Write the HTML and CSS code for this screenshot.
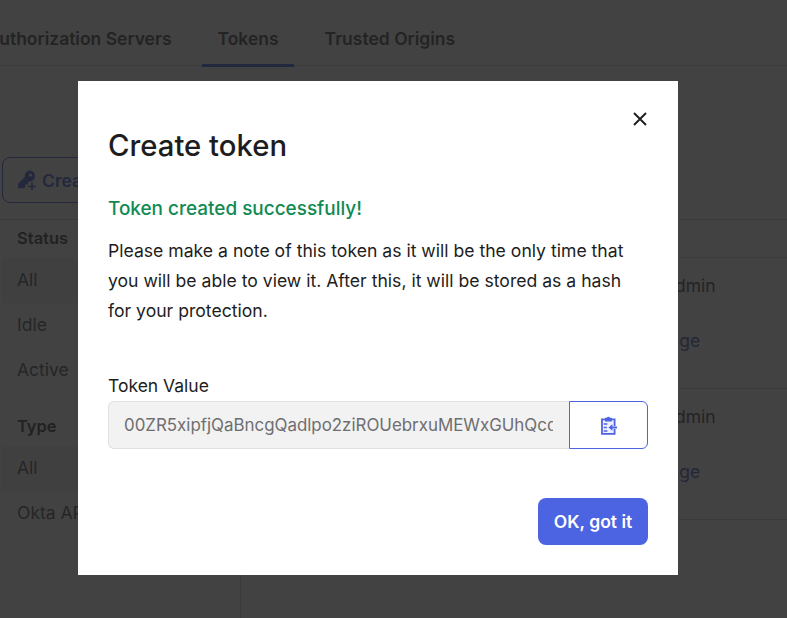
FILE: index.html
```html
<!DOCTYPE html>
<html lang="en">
<head>
<meta charset="utf-8">
<title>Create token</title>
<link rel="stylesheet" href="styles.css">
</head>
<body>
<div class="page">
  <nav class="tabs">
    <a class="tab">Authorization Servers</a>
    <a class="tab active">Tokens</a>
    <a class="tab">Trusted Origins</a>
  </nav>
  <div class="toolbar">
    <button class="create">
      <svg class="key" viewBox="0 0 20 20" width="20" height="20"><path fill="#4c64e2" d="M12.200 0.500a5.600 5.600 0 0 1 1.600 11l-1.400-.2-1.600 1.600v1.600H8.300v2.200l-1.600 1.600H1v-4.400l6.800-6.900A5.600 5.600 0 0 1 12.200.5zm1.200 2.900a1.600 1.600 0 1 0 0 3.200 1.600 1.600 0 0 0 0-3.200z"/><path fill="none" stroke="#fff" stroke-width="4.500" d="M15 13v7M11.500 16.500h7"/><path fill="none" stroke="#4c64e2" stroke-width="1.700" d="M15 12.500v7.500M11.200 16.500h7.600"/></svg>
      Create Token
    </button>
  </div>
  <div class="content">
    <aside class="filters">
      <h3 class="filter-title">Status</h3>
      <div class="filter selected">All</div>
      <div class="filter">Idle</div>
      <div class="filter">Active</div>
      <h3 class="filter-title second">Type</h3>
      <div class="filter selected">All</div>
      <div class="filter">Okta API</div>
    </aside>
    <section class="table">
      <div class="thead"></div>
      <div class="row"><span class="who">Super Admin</span><a class="link">Open page</a></div>
      <div class="row"><span class="who">Super Admin</span><a class="link">Open page</a></div>
    </section>
  </div>
</div>
<div class="overlay">
  <div class="modal" role="dialog">
    <button class="close" aria-label="Close">
      <svg viewBox="0 0 16 16" width="16" height="16"><path fill="none" stroke="#1d1d21" stroke-width="1.900" d="M2 2l12 12M14 2L2 14"/></svg>
    </button>
    <h2 class="title">Create token</h2>
    <p class="success">Token created successfully!</p>
    <p class="note">Please make a note of this token as it will be the only time that you will be able to view it. After this, it will be stored as a hash for your protection.</p>
    <label class="label" for="token">Token Value</label>
    <div class="field">
      <input id="token" class="value" readonly value="00ZR5xipfjQaBncgQadlpo2ziROUebrxuMEWxGUhQcdE3kTz9vPq">
      <button class="copy" aria-label="Copy">
        <svg viewBox="0 0 17 19" width="17" height="19"><path fill="#4c64e2" fill-opacity=".1" stroke="#4c64e2" stroke-width="1.800" d="M2 3.400h12.600v14.400H2z"/><path fill="#4c64e2" d="M5 1.800h1.800a1.700 1.700 0 0 1 3.200 0h1.800v3.600H5z"/><path fill="none" stroke="#4c64e2" stroke-width="1.700" d="M3.800 8h3.600M3.800 11.500h3M3.800 15h3.600"/><path fill="none" stroke="#fff" stroke-width="3" d="M17 11.500H9"/><path fill="#4c64e2" d="M17 10.600H12.400V8.200L8.500 11.500l3.900 3.300v-2.400H17z"/></svg>
      </button>
    </div>
    <div class="actions"><button class="ok">OK, got it</button></div>
  </div>
</div>
</body>
</html>
```
FILE: styles.css
```css
* { box-sizing: border-box; }
html, body { margin: 0; height: 100%; }
body {
  width: 787px;
  height: 618px;
  overflow: hidden;
  position: relative;
  background: #fff;
  font-family: Inter, "Noto Sans", sans-serif;
  font-size: 17.5px;
  color: #1d1d21;
}
.page { height: 618px; overflow: hidden; }
.tabs {
  display: flex;
  height: 66px;
  border-bottom: 1px solid #d7d7dc;
  margin-left: -29px;
  width: 816px;
}
.tab {
  height: 67px;
  padding: 0 15.5px;
  margin-right: 15px;
  line-height: 77px;
  font-weight: 600;
  color: #4a4a4e;
  white-space: nowrap;
  border-bottom: 3px solid transparent;
}
.tab.active { border-bottom-color: #4c64e2; }
.toolbar { padding: 91px 0 16px 2px; height: 154px; border-bottom: 1px solid #d7d7dc; }
.create {
  display: flex;
  align-items: center;
  gap: 5px;
  width: 170px;
  height: 46px;
  padding: 0 14px;
  background: #fff;
  border: 1px solid #4c64e2;
  border-radius: 8px;
  font: 600 17.5px Inter, sans-serif;
  color: #4c64e2;
}
.key { flex: none; }
.content { display: flex; height: 398px; }
.filters { width: 241px; border-right: 1px solid #d7d7dc; padding: 7px 0 0 2px; }
.filter-title { margin: 0; height: 31px; padding-left: 15px; line-height: 23px; font-size: 16.5px; font-weight: 600; color: #3f3f43; }
.filter-title.second { margin-top: 22px; }
.filter { height: 45px; padding-left: 15px; line-height: 44px; color: #55555a; }
.filter.selected { background: #f4f4f4; }
.table { flex: 1; }
.thead { height: 38px; border-bottom: 1px solid #d7d7dc; }
.row {
  height: 131px;
  padding: 16px 0 0 368px;
  border-bottom: 1px solid #d7d7dc;
  display: flex;
  flex-direction: column;
  gap: 31px;
  line-height: 24px;
}
.who { color: #4a4a4e; white-space: nowrap; }
.link { color: #4c5cb8; white-space: nowrap; }
.overlay {
  position: absolute;
  inset: 0;
  background: rgba(28, 28, 28, 0.83);
}
.modal {
  position: relative;
  width: 600px;
  height: 494px;
  margin: 81px 0 0 78px;
  padding: 46px 30px 30px;
  background: #fff;
  display: flex;
  flex-direction: column;
}
.close {
  position: absolute;
  top: 30px;
  right: 30px;
  width: 16px;
  height: 16px;
  padding: 0;
  border: 0;
  background: none;
  display: flex;
}
.title {
  margin: 0;
  height: 36px;
  font-size: 29.3px;
  line-height: 37px;
  font-weight: 500;
  color: #1d1d21;
}
.success {
  margin: 34px 0 0;
  line-height: 24px;
  font-size: 18.95px;
  font-weight: 500;
  color: #108a52;
}
.note {
  margin: 15px 0 0;
  width: 530px;
  font-size: 17.6px;
  line-height: 30px;
}
.label {
  margin-top: 48px;
  line-height: 24px;
  height: 24px;
}
.field { display: flex; margin-top: 3px; height: 48px; }
.value {
  width: 461px;
  height: 48px;
  padding: 0 16px 0 15px;
  background: #f2f2f2;
  border: 1px solid #e1e1e1;
  border-right: 0;
  border-radius: 6px 0 0 6px;
  font: 16.9px Inter, sans-serif;
  color: #6e6e70;
  outline: 0;
}
.copy {
  width: 79px;
  height: 48px;
  padding: 0;
  background: #fff;
  border: 1px solid #4c64e2;
  border-radius: 0 6px 6px 0;
  display: flex;
  align-items: center;
  justify-content: center;
}
.actions { display: flex; justify-content: flex-end; margin-top: 49px; }
.ok {
  width: 110px;
  height: 47px;
  padding: 0;
  background: #4c64e2;
  border: 0;
  border-radius: 8px;
  font: 600 17.5px Inter, sans-serif;
  color: #fff;
}
```
